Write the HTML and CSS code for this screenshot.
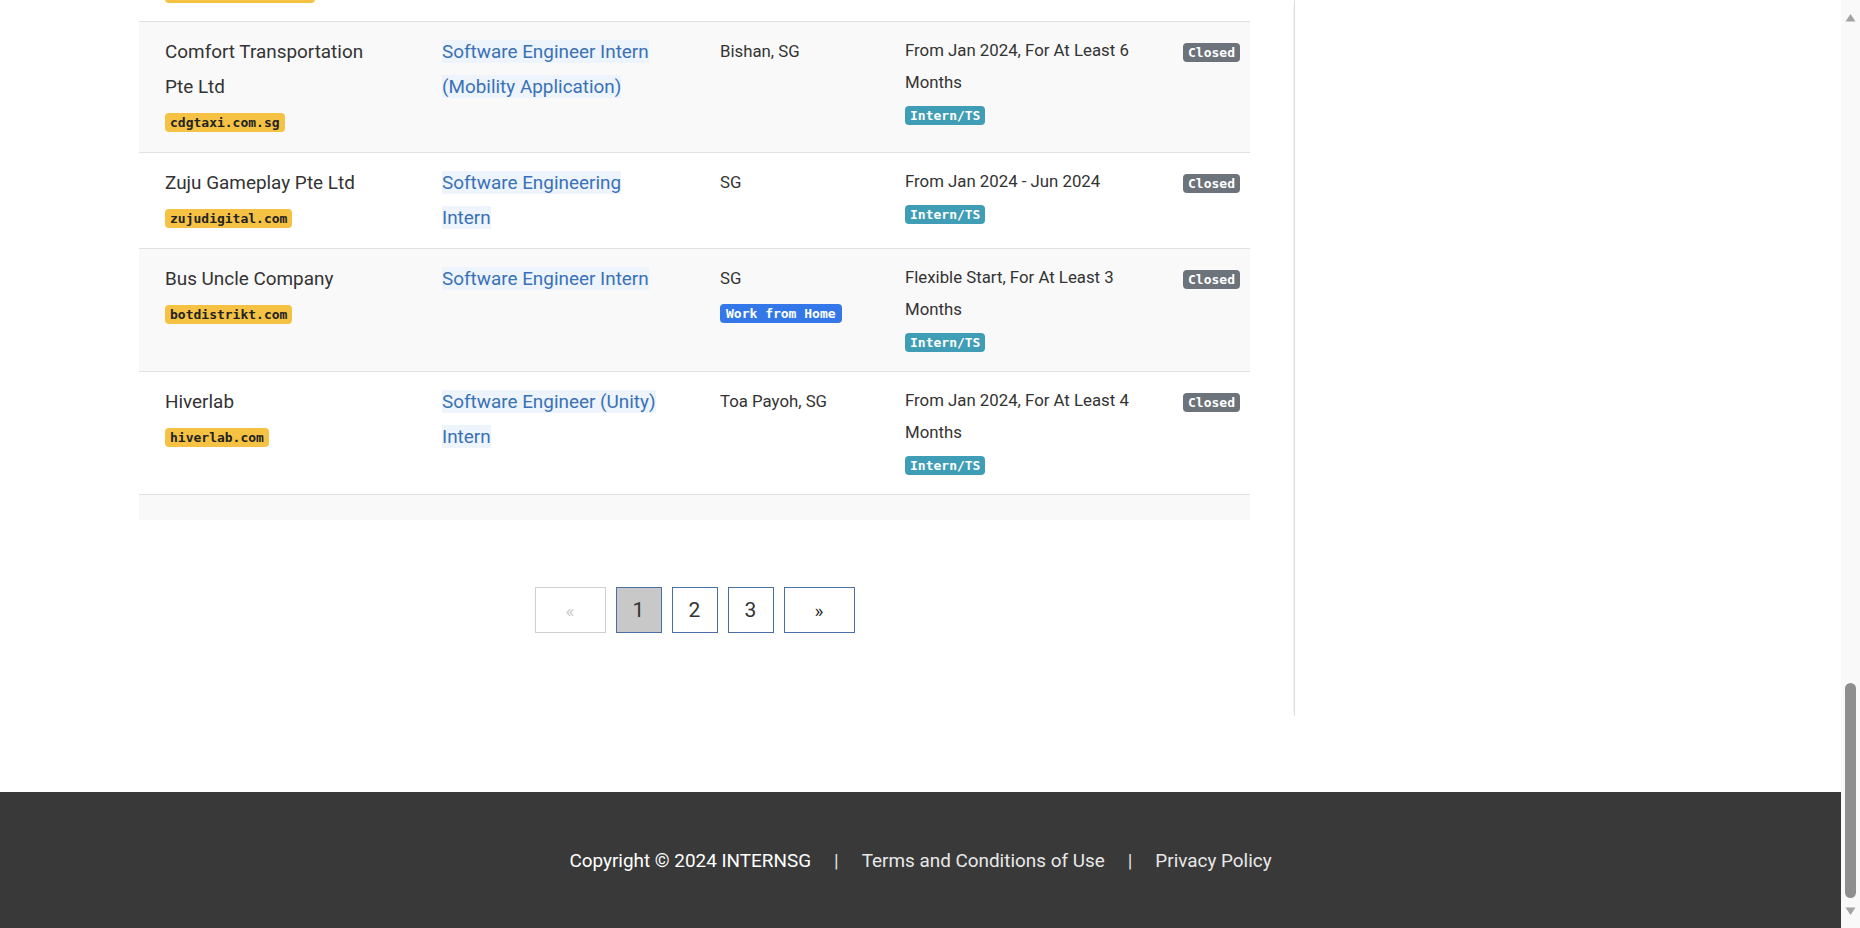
FILE: index.html
```html
<!DOCTYPE html>
<html lang="en">
<head>
<meta charset="utf-8">
<title>InternSG - Jobs</title>
<link rel="stylesheet" href="styles.css">
</head>
<body>
<div class="window">
  <div class="viewport">
    <div class="layout">
      <main class="main">
        <div class="jobs">
          <div class="row row-stub" aria-hidden="true">
            <div class="cell c-company stub-inner">
              <span class="stub-badge"></span>
            </div>
          </div>

          <div class="row striped">
            <div class="cell c-company">
              <div class="company">Comfort Transportation Pte Ltd</div>
              <div class="badge-line"><span class="badge badge-domain">cdgtaxi.com.sg</span></div>
            </div>
            <div class="cell c-title"><a class="job-link" href="#">Software Engineer Intern (Mobility Application)</a></div>
            <div class="cell c-loc"><div class="loc">Bishan, SG</div></div>
            <div class="cell c-dur">
              <div class="dur">From Jan 2024, For At Least 6 Months</div>
              <div class="dur-badge"><span class="badge badge-type">Intern/TS</span></div>
            </div>
            <div class="cell c-status"><span class="badge badge-closed">Closed</span></div>
          </div>

          <div class="row">
            <div class="cell c-company">
              <div class="company">Zuju Gameplay Pte Ltd</div>
              <div class="badge-line"><span class="badge badge-domain">zujudigital.com</span></div>
            </div>
            <div class="cell c-title"><a class="job-link" href="#">Software Engineering Intern</a></div>
            <div class="cell c-loc"><div class="loc">SG</div></div>
            <div class="cell c-dur">
              <div class="dur">From Jan 2024 - Jun 2024</div>
              <div class="dur-badge"><span class="badge badge-type">Intern/TS</span></div>
            </div>
            <div class="cell c-status"><span class="badge badge-closed">Closed</span></div>
          </div>

          <div class="row striped">
            <div class="cell c-company">
              <div class="company">Bus Uncle Company</div>
              <div class="badge-line"><span class="badge badge-domain">botdistrikt.com</span></div>
            </div>
            <div class="cell c-title"><a class="job-link" href="#">Software Engineer Intern</a></div>
            <div class="cell c-loc">
              <div class="loc">SG</div>
              <div class="badge-line loc-badge"><span class="badge badge-wfh">Work from Home</span></div>
            </div>
            <div class="cell c-dur">
              <div class="dur">Flexible Start, For At Least 3 Months</div>
              <div class="dur-badge"><span class="badge badge-type">Intern/TS</span></div>
            </div>
            <div class="cell c-status"><span class="badge badge-closed">Closed</span></div>
          </div>

          <div class="row">
            <div class="cell c-company">
              <div class="company">Hiverlab</div>
              <div class="badge-line"><span class="badge badge-domain">hiverlab.com</span></div>
            </div>
            <div class="cell c-title"><a class="job-link" href="#">Software Engineer (Unity) Intern</a></div>
            <div class="cell c-loc"><div class="loc">Toa Payoh, SG</div></div>
            <div class="cell c-dur">
              <div class="dur">From Jan 2024, For At Least 4 Months</div>
              <div class="dur-badge"><span class="badge badge-type">Intern/TS</span></div>
            </div>
            <div class="cell c-status"><span class="badge badge-closed">Closed</span></div>
          </div>

          <div class="row row-foot striped"></div>
        </div>

        <nav class="pagination">
          <span class="page page-arrow page-disabled">&laquo;</span>
          <span class="page page-active">1</span>
          <a class="page" href="#">2</a>
          <a class="page" href="#">3</a>
          <a class="page page-arrow" href="#">&raquo;</a>
        </nav>
      </main>
      <aside class="sidebar"></aside>
    </div>

    <footer class="footer">
      <span class="copy">Copyright &copy; 2024 INTERNSG</span>
      <span class="sep">|</span>
      <a class="foot-link" href="#">Terms and Conditions of Use</a>
      <span class="sep">|</span>
      <a class="foot-link" href="#">Privacy Policy</a>
    </footer>
  </div>

  <div class="scrollbar">
    <div class="sb-arrow sb-up">
      <svg width="11" height="9" viewBox="0 0 11 9"><path d="M5.5 1 L10.5 8.5 L0.5 8.5 Z" fill="#a3a3a3"/></svg>
    </div>
    <div class="sb-space"></div>
    <div class="sb-thumb"></div>
    <div class="sb-arrow sb-down">
      <svg width="11" height="9" viewBox="0 0 11 9"><path d="M0.5 0.5 L10.5 0.5 L5.5 8 Z" fill="#a3a3a3"/></svg>
    </div>
  </div>
</div>
</body>
</html>
```

FILE: styles.css
```css
* {
  box-sizing: border-box;
}

html, body {
  margin: 0;
  padding: 0;
  height: 100%;
  overflow: hidden;
  background: #ffffff;
}

body {
  font-family: Roboto, "Liberation Sans", Arial, sans-serif;
  color: #333333;
}

.window {
  display: flex;
  width: 1860px;
  height: 928px;
}

.viewport {
  flex: 1;
  display: flex;
  flex-direction: column;
  overflow: hidden;
}

.layout {
  display: flex;
  align-items: stretch;
  padding-left: 139px;
}

.main {
  width: 1111px;
  padding-bottom: 83px;
  display: flex;
  flex-direction: column;
}

.sidebar {
  flex: 1;
  margin-left: 44px;
  border-left: 1px solid #dedede;
  box-shadow: -5px 0 0 -4px #f4f4f4;
}

/* ---------- table ---------- */
.jobs {
  display: flex;
  flex-direction: column;
}

.row {
  display: grid;
  grid-template-columns: 291px 278px 185px 278px 79px;
  border-top: 1px solid #dfe2e5;
}

.row.striped {
  background: #f9f9f9;
}

.row-stub {
  border-top: none;
  height: 21px;
  grid-template-rows: 21px;
  overflow: hidden;
}

.stub-inner {
  height: 21px;
  display: flex;
  flex-direction: column;
  justify-content: flex-end;
  align-items: flex-start;
  padding-bottom: 18px !important;
  padding-top: 0 !important;
}

.stub-badge {
  display: block;
  width: 150px;
  height: 19px;
  flex-shrink: 0;
  border-radius: 4px;
  background: #f6c244;
}

.row-foot {
  height: 26px;
}

.cell {
  padding: 12px 12px;
}

.c-company {
  padding-left: 26px;
  padding-right: 40px;
}

.c-title {
  padding-right: 40px;
}

.c-status {
  padding-right: 0;
  line-height: 36px;
}

.company {
  font-size: 18.9px;
  line-height: 35px;
  color: #333;
}

.badge-line {
  height: 36px;
  display: flex;
  align-items: center;
}

.loc-badge {
  height: 35px;
}

.job-link {
  font-size: 18.9px;
  line-height: 35px;
  color: #3a71b6;
  text-decoration: none;
  background: #eef4fb;
}

.loc {
  font-size: 16.8px;
  line-height: 35px;
  color: #333;
}

.dur {
  font-size: 16.8px;
  line-height: 32px;
  color: #333;
}

.dur-badge {
  height: 34px;
  display: flex;
  align-items: center;
}

.badge {
  display: inline-block;
  font-family: "DejaVu Sans Mono", "Liberation Mono", monospace;
  font-weight: bold;
  font-size: 13px;
  line-height: 13px;
  padding: 3px 5px;
  border-radius: 4px;
  white-space: nowrap;
  vertical-align: middle;
}

.badge-domain {
  background: #f6c244;
  color: #222222;
}

.badge-type {
  background: #3f9db5;
  color: #ffffff;
}

.badge-closed {
  background: #6c737b;
  color: #ffffff;
}

.badge-wfh {
  background: #3377e8;
  color: #ffffff;
  padding: 3px 6px;
}

/* ---------- pagination ---------- */
.pagination {
  margin-top: 67px;
  display: flex;
  justify-content: center;
  gap: 10px;
}

.page {
  width: 46px;
  height: 46px;
  display: flex;
  align-items: center;
  justify-content: center;
  border: 1px solid #4a6fa4;
  color: #333333;
  font-size: 21px;
  text-decoration: none;
  background: #ffffff;
}

.page-arrow {
  width: 71px;
  font-size: 19px;
}

.page-disabled {
  border-color: #cfcfcf;
  color: #cccccc;
}

.page-active {
  background: #c8c8c8;
}

/* ---------- footer ---------- */
.footer {
  margin-top: 76px;
  height: 137px;
  flex-shrink: 0;
  background: #393939;
  display: flex;
  align-items: center;
  justify-content: center;
  gap: 23px;
  font-size: 18.9px;
}

.copy {
  color: #ffffff;
}

.sep {
  color: #e0e0e0;
}

.foot-link {
  color: #e8e8e8;
  text-decoration: none;
}

/* ---------- scrollbar ---------- */
.scrollbar {
  width: 19px;
  height: 928px;
  background: #f9f9f9;
  display: flex;
  flex-direction: column;
  align-items: center;
}

.sb-arrow {
  display: flex;
  justify-content: center;
}

.sb-up {
  height: 24px;
  padding-top: 13px;
}

.sb-space {
  flex: 1;
}

.sb-thumb {
  width: 11px;
  height: 215px;
  border-radius: 6px;
  background: #8e8e8e;
}

.sb-down {
  height: 30px;
  padding-top: 9px;
}
```
